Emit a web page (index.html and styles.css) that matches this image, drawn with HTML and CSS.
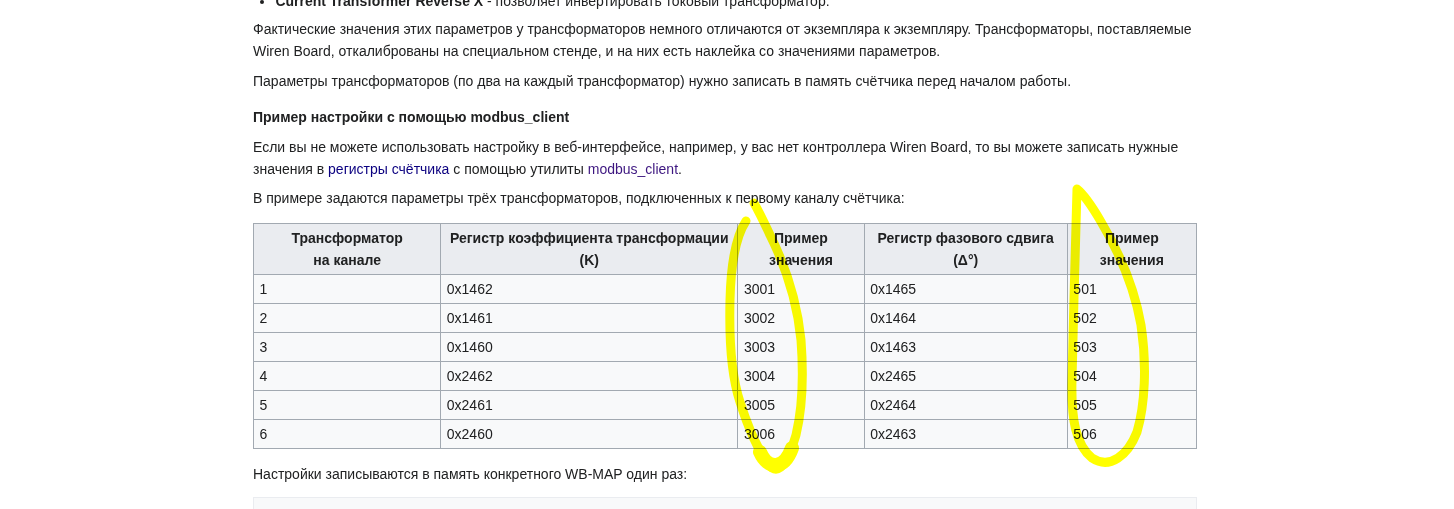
FILE: index.html
```html
<!DOCTYPE html>
<html lang="ru">
<head>
<meta charset="utf-8">
<title>WB-MAP</title>
<link rel="stylesheet" href="styles.css">
</head>
<body>
<div class="page">
  <div class="content">
    <ul class="list">
      <li><b>Current Transformer Reverse X</b> - позволяет инвертировать токовый трансформатор.</li>
    </ul>
    <p>Фактические значения этих параметров у трансформаторов немного отличаются от экземпляра к экземпляру. Трансформаторы, поставляемые Wiren Board, откалиброваны на специальном стенде, и на них есть наклейка со значениями параметров.</p>
    <p>Параметры трансформаторов (по два на каждый трансформатор) нужно записать в память счётчика перед началом работы.</p>
    <h4 class="subhead">Пример настройки с помощью modbus_client</h4>
    <p>Если вы не можете использовать настройку в веб-интерфейсе, например, у вас нет контроллера Wiren Board, то вы можете записать нужные значения в <a class="link" href="#">регистры счётчика</a> с помощью утилиты <a class="link visited" href="#">modbus_client</a>.</p>
    <p>В примере задаются параметры трёх трансформаторов, подключенных к первому каналу счётчика:</p>
    <table class="wikitable">
      <thead>
        <tr>
          <th class="c1">Трансформатор<br>на канале</th>
          <th class="c2">Регистр коэффициента трансформации<br>(K)</th>
          <th class="c3">Пример<br>значения</th>
          <th class="c4">Регистр фазового сдвига<br>(Δ°)</th>
          <th class="c5">Пример<br>значения</th>
        </tr>
      </thead>
      <tbody>
        <tr><td>1</td><td>0x1462</td><td>3001</td><td>0x1465</td><td>501</td></tr>
        <tr><td>2</td><td>0x1461</td><td>3002</td><td>0x1464</td><td>502</td></tr>
        <tr><td>3</td><td>0x1460</td><td>3003</td><td>0x1463</td><td>503</td></tr>
        <tr><td>4</td><td>0x2462</td><td>3004</td><td>0x2465</td><td>504</td></tr>
        <tr><td>5</td><td>0x2461</td><td>3005</td><td>0x2464</td><td>505</td></tr>
        <tr><td>6</td><td>0x2460</td><td>3006</td><td>0x2463</td><td>506</td></tr>
      </tbody>
    </table>
    <p class="after">Настройки записываются в память конкретного WB-MAP один раз:</p>
    <pre class="code"> </pre>
  </div>
  <svg class="marks" width="1454" height="509" viewBox="0 0 1454 509" aria-hidden="true">
    <path d="M746 221 C736 236 731 260 730 300 C729 340 731 375 740 402 C749 430 760 455 772 468 C782 474 790 455 796 435 C802 410 804 380 801 340 C797 300 785 265 770 235 C763 220 758 210 754 203" />
    <path d="M1077 189 C1076 240 1073 320 1072 380 C1071 420 1076 445 1092 458 C1110 470 1128 455 1137 432 C1145 405 1147 365 1141 325 C1134 285 1118 250 1100 220 C1090 203 1082 193 1077 189" />
    <path class="blob" d="M760 452 C768 470 784 470 792 448" />
  </svg>
</div>
</body>
</html>
```

FILE: styles.css
```css
html, body {
  margin: 0;
  padding: 0;
  background: #ffffff;
}

.page {
  position: relative;
  width: 1454px;
  height: 509px;
  overflow: hidden;
  font-family: "Liberation Sans", Arial, sans-serif;
  font-size: 14px;
  line-height: 22.4px;
  color: #202122;
}

.content {
  width: 944px;
  margin-left: 253px;
  padding-top: 1px;
  margin-top: -11px;
}

.list {
  margin: 0 0 0 22.4px;
  padding: 0;
  list-style: disc;
}

.list b {
  font-weight: bold;
}

p {
  margin: 5.6px 0 7px 0;
}

.subhead {
  font-size: 14px;
  font-weight: bold;
  margin: 14px 0 7px 0;
  line-height: 22.4px;
}

.link {
  color: #0b0080;
  text-decoration: none;
}

.link.visited {
  color: #3d1680;
}

.wikitable {
  width: 943px;
  margin: 13px 0 0 0;
  border-collapse: collapse;
  table-layout: fixed;
  background: #f8f9fa;
  border: 1px solid #a2a9b1;
  color: #202122;
}

.wikitable th,
.wikitable td {
  border: 1px solid #a2a9b1;
  padding: 2.8px 5.6px;
  font-size: 14px;
  line-height: 22.4px;
  vertical-align: middle;
}

.wikitable th {
  background: #eaecf0;
  text-align: center;
  font-weight: bold;
}

.wikitable td {
  text-align: left;
}

.c1 { width: 175px; }
.c2 { width: 285px; }
.c3 { width: 114px; }
.c4 { width: 191px; }
.c5 { width: 117px; }

.after {
  margin-top: 14px;
}

.code {
  margin: 11px 0 0 0;
  height: 40px;
  background: #f8f9fa;
  border: 1px solid #eaecf0;
  font-family: "Liberation Mono", monospace;
}

.marks {
  position: absolute;
  left: 0;
  top: 0;
  pointer-events: none;
  mix-blend-mode: multiply;
}

.marks path {
  fill: none;
  stroke: #ffff00;
  stroke-width: 9;
  stroke-linecap: round;
  stroke-linejoin: round;
}

.marks .blob {
  stroke-width: 14;
}
```
